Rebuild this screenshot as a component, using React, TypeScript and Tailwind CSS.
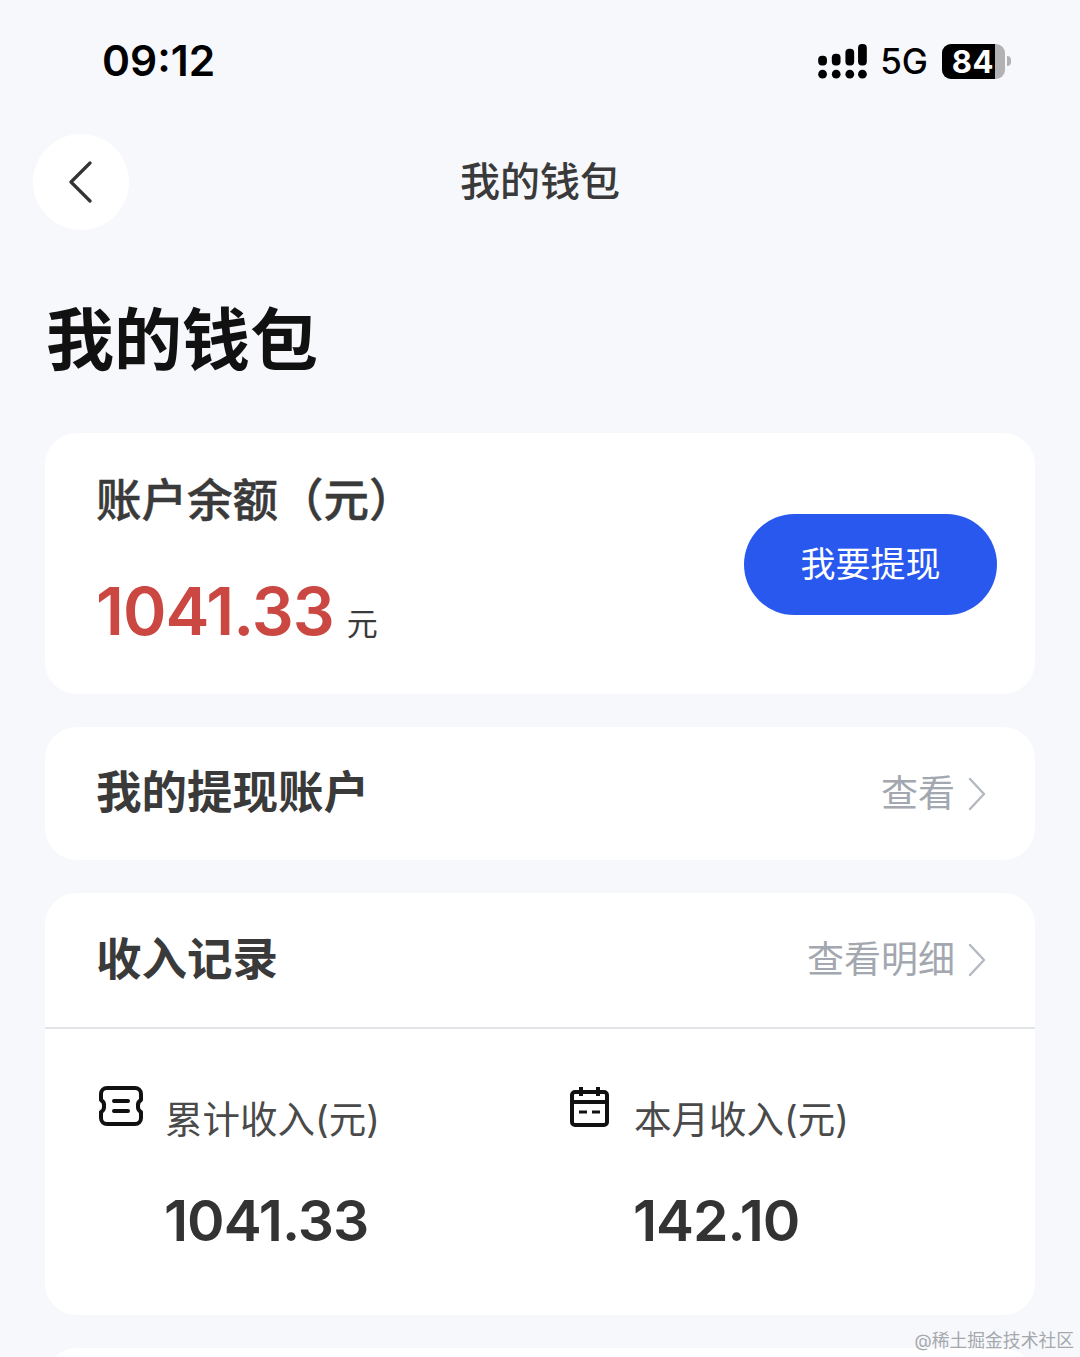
const cjk = { fontFamily: 'Inter, "Noto Sans CJK SC", sans-serif' }

function SignalIcon() {
  return (
    <svg className="-mr-[1px]" width="49" height="35" viewBox="0 0 50 36" fill="#000">
      <rect x="0" y="12" width="9" height="10" rx="4" />
      <rect x="14" y="10" width="9" height="12" rx="4" />
      <rect x="28" y="5" width="9" height="17" rx="4" />
      <rect x="41" y="0" width="9" height="22" rx="4" />
      <circle cx="4.5" cy="31" r="4.5" />
      <circle cx="18.5" cy="31" r="4.5" />
      <circle cx="32.5" cy="31" r="4.5" />
      <circle cx="45.5" cy="31" r="4.5" />
    </svg>
  )
}

function Battery() {
  return (
    <div className="flex items-center">
      <div className="flex h-[35px] w-[63px] overflow-hidden rounded-[9px] bg-[#b2b2b5]">
        <div className="flex w-[53px] items-center justify-end bg-black pr-[1px] text-[31px] font-bold leading-none tracking-[0.5px] text-white">84</div>
      </div>
      <div className="ml-[2px] h-[10px] w-[4px] rounded-r-full bg-[#b2b2b5]" />
    </div>
  )
}

function BackIcon() {
  return (
    <svg width="24" height="42" viewBox="0 0 24 42" fill="none" stroke="#333" strokeWidth="3.2" strokeLinecap="round" strokeLinejoin="round">
      <path d="M22 2 3 21l19 19" />
    </svg>
  )
}

function MoreIcon() {
  return (
    <svg width="18" height="34" viewBox="0 0 18 34" fill="none" stroke="#b4b8c0" strokeWidth="2.4" strokeLinecap="round" strokeLinejoin="round">
      <path d="m2 2 14 15L2 32" />
    </svg>
  )
}

function TicketIcon() {
  return (
    <svg width="46" height="40" viewBox="0 0 46 40" fill="none" stroke="#111" strokeWidth="4" strokeLinejoin="round" strokeLinecap="round">
      <path d="M9 2h28a6 6 0 0 1 6 6v6a6 6 0 0 0-3 6 6 6 0 0 0 3 6v6a6 6 0 0 1-6 6H9a6 6 0 0 1-6-6v-6a6 6 0 0 0 3-6 6 6 0 0 0-3-6V8a6 6 0 0 1 6-6z" />
      <path d="M16 15h14M16 25h14" />
    </svg>
  )
}

function CalendarIcon() {
  return (
    <svg className="ml-[2px]" width="42" height="42" viewBox="0 0 42 42" fill="none" stroke="#111" strokeWidth="4" strokeLinejoin="round">
      <rect x="3" y="6" width="35" height="33" rx="3" />
      <path d="M3 16h35M12 1v9M29 1v9" />
      <path d="M10 26h8M23 26h8" strokeWidth="3" />
    </svg>
  )
}

function Stat({ icon, label, value, width }: { icon: React.ReactNode; label: string; value: string; width: string }) {
  return (
    <div className={width}>
      <div className="flex items-start">
        <div className="flex w-[67px] shrink-0 pt-[1px]">{icon}</div>
        <span className="mt-[10px] text-[37.5px] leading-[50px] text-[#4a4a4a]">{label}</span>
      </div>
      <div className="mt-[41px] ml-[66px] text-[57px] font-semibold leading-[70px] tracking-[-1px] text-[#333]">{value}</div>
    </div>
  )
}

export default function App() {
  return (
    <div className="relative h-[1357px] w-[1080px] overflow-hidden bg-[#f7f8fc]" style={cjk}>
      {/* Barre d'état */}
      <div className="flex h-[122px] items-center justify-between pl-[102px] pr-[69px]">
        <span className="text-[42.5px] font-semibold leading-none text-black">09:12</span>
        <div className="flex items-center gap-[14px]">
          <SignalIcon />
          <span className="text-[35px] font-medium leading-none text-black">5G</span>
          <Battery />
        </div>
      </div>

      {/* Navigation */}
      <div className="relative mt-[12px] flex h-[96px] items-center justify-center">
        <div className="absolute left-[33px] top-0 flex h-[96px] w-[96px] items-center justify-center rounded-full bg-white">
          <span className="-ml-[2px] flex"><BackIcon /></span>
        </div>
        <span className="text-[40px] font-medium text-[#3a3a3a]">我的钱包</span>
      </div>

      <h1 className="mt-[65px] pl-[46px] text-[68px] font-bold leading-[90px] text-[#111]">我的钱包</h1>

      <div className="mx-[45px] mt-[48px] flex flex-col gap-[33px]">
        {/* Solde */}
        <div className="flex h-[261px] items-center justify-between rounded-[32px] bg-white pl-[51px] pr-[38px]">
          <div>
            <div className="text-[45.5px] font-medium leading-[60px] text-[#3a3a3a] [-webkit-text-stroke:0.5px_#3a3a3a]">账户余额（元）</div>
            <div className="mt-[35px] flex items-baseline">
              <span className="text-[66px] font-semibold leading-[90px] tracking-[-1px] text-[#cb4741]">1041.33</span>
              <span className="ml-[13px] text-[31px] text-[#3a3a3a]">元</span>
            </div>
          </div>
          <button className="mt-[2px] flex h-[101px] w-[253px] items-center justify-center rounded-full bg-[#2858ee] text-[35px] font-normal text-white">
            我要提现
          </button>
        </div>

        {/* Compte de retrait */}
        <div className="flex h-[133px] items-center justify-between rounded-[32px] bg-white pl-[51px] pr-[49px]">
          <span className="text-[45.5px] font-semibold text-[#3a3a3a]">我的提现账户</span>
          <div className="flex items-center gap-[13px]">
            <span className="text-[37px] text-[#a3a7b0]">查看</span>
            <MoreIcon />
          </div>
        </div>

        {/* Revenus */}
        <div className="h-[422px] rounded-[32px] bg-white">
          <div className="flex h-[136px] items-center justify-between border-b-2 border-[#e3e4e8] pl-[51px] pr-[49px]">
            <span className="text-[45.5px] font-semibold text-[#3a3a3a]">收入记录</span>
            <div className="flex items-center gap-[13px]">
              <span className="text-[37px] text-[#a3a7b0]">查看明细</span>
              <MoreIcon />
            </div>
          </div>
          <div className="flex pl-[53px] pt-[56px]">
            <Stat icon={<TicketIcon />} label="累计收入(元)" value="1041.33" width="w-[469px]" />
            <Stat icon={<CalendarIcon />} label="本月收入(元)" value="142.10" width="w-[400px]" />
          </div>
        </div>

        <div className="h-[100px] rounded-[32px] bg-white" />
      </div>

      <span className="absolute bottom-[3px] right-[6px] text-[17.8px] leading-[26px] text-[#a5a8ad]">@稀土掘金技术社区</span>
    </div>
  )
}
